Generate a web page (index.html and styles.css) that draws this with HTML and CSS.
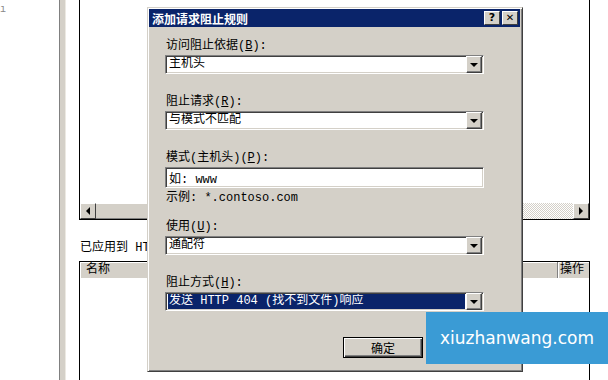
FILE: index.html
```html
<!DOCTYPE html>
<html lang="zh-CN">
<head>
  <meta charset="UTF-8" />
  <title>添加请求阻止规则</title>
  <link rel="stylesheet" href="styles.css">
</head>
<body>

  <div class="desk">
    <div class="left-pane"><span class="stray">ı</span></div>
    <div class="splitter"></div>
    <div class="gap"></div>

    <!-- 背景窗口 -->
    <div class="panel">
      <div class="upper-list">
        <div class="list-space"></div>
        <div class="hscroll">
          <span class="sbtn"><i class="tri-left"></i></span>
          <span class="thumb"></span>
          <span class="track"></span>
          <span class="sbtn"><i class="tri-right"></i></span>
        </div>
      </div>
      <div class="applied">已应用到 HTTP</div>
      <div class="lower-list">
        <div class="list-head">
          <span class="col col-name">名称</span>
          <span class="col col-op">操作</span>
        </div>
      </div>
    </div>
    <div class="right-pane"></div>
  </div>

  <!-- 对话框 -->
  <div class="dialog">
    <div class="titlebar">
      <span class="title">添加请求阻止规则</span>
      <div class="caption-btns">
        <span class="cbtn">?</span>
        <span class="cbtn cbtn-x">✕</span>
      </div>
    </div>

    <div class="dlg-body">
      <div class="field">
        <label>访问阻止依据(<u>B</u>):</label>
        <div class="combo"><span class="combo-text">主机头</span><span class="drop"><i></i></span></div>
      </div>

      <div class="field">
        <label>阻止请求(<u>R</u>):</label>
        <div class="combo"><span class="combo-text">与模式不匹配</span><span class="drop"><i></i></span></div>
      </div>

      <div class="field">
        <label>模式(主机头)(<u>P</u>):</label>
        <div class="textbox">如: www</div>
        <div class="example">示例: *.contoso.com</div>
      </div>

      <div class="field field-tight">
        <label>使用(<u>U</u>):</label>
        <div class="combo"><span class="combo-text">通配符</span><span class="drop"><i></i></span></div>
      </div>

      <div class="field">
        <label>阻止方式(<u>H</u>):</label>
        <div class="combo combo-selected"><span class="combo-text">发送 HTTP 404 (找不到文件)响应</span><span class="drop"><i></i></span></div>
      </div>
    </div>

    <div class="dlg-foot">
      <button class="btn btn-default">确定</button>
    </div>
  </div>

  <!-- 水印 -->
  <div class="watermark">xiuzhanwang.com</div>

</body>
</html>
```

FILE: styles.css
```css
body {
  margin: 0;
  width: 608px;
  height: 380px;
  overflow: hidden;
  background: #fff;
  font-family: 'Liberation Mono', 'Noto Sans CJK SC', monospace;
  font-size: 12px;
  color: #000;
  position: relative;
}

.desk {
  display: flex;
  height: 380px;
}

.left-pane {
  width: 59px;
  position: relative;
}

.stray {
  position: absolute;
  left: 0;
  top: 4px;
  font-size: 10px;
  color: #888;
}

.splitter {
  width: 5px;
  background: #d4d0c8;
  border-left: 1px solid #808080;
  border-right: 1px solid #ece9e2;
}

.gap {
  width: 13px;
}

.panel {
  width: 511px;
  display: flex;
  flex-direction: column;
}

.upper-list {
  height: 219px;
  border: 1px solid #000;
  border-top: none;
  display: flex;
  flex-direction: column;
}

.list-space {
  flex: 1;
}

.hscroll {
  height: 16px;
  display: flex;
}

.sbtn {
  width: 14px;
  height: 14px;
  background: #d4d0c8;
  border: 1px solid;
  border-color: #fff #404040 #404040 #fff;
  display: flex;
  align-items: center;
  justify-content: center;
}

.tri-left {
  border-top: 4px solid transparent;
  border-bottom: 4px solid transparent;
  border-right: 4px solid #000;
}

.tri-right {
  border-top: 4px solid transparent;
  border-bottom: 4px solid transparent;
  border-left: 4px solid #000;
}

.thumb {
  width: 200px;
  background: #d4d0c8;
  border-top: 1px solid #fff;
  border-bottom: 1px solid #808080;
}

.track {
  flex: 1;
  background: repeating-conic-gradient(#d4d0c8 0 25%, #fff 0 50%) 0 0 / 2px 2px;
}

.applied {
  margin-top: 21px;
  line-height: 14px;
  padding-left: 1px;
}

.lower-list {
  flex: 1;
  margin-top: 6px;
  border: 1px solid #000;
  border-bottom: none;
}

.list-head {
  display: flex;
  height: 16px;
  background: #d4d0c8;
}

.col {
  line-height: 16px;
  box-sizing: border-box;
  border-right: 1px solid #808080;
  box-shadow: inset 1px 1px #fff;
}

.col-name {
  flex: 1;
  padding-left: 6px;
}

.col-op {
  width: 31px;
  padding-left: 2px;
  border-right: none;
}

.right-pane {
  flex: 1;
}

/* 对话框 */
.dialog {
  position: absolute;
  left: 147px;
  top: 7px;
  width: 376px;
  height: 365px;
  box-sizing: border-box;
  background: #d4d0c8;
  border: 1px solid;
  border-color: #d4d0c8 #404040 #404040 #d4d0c8;
  box-shadow: inset 1px 1px #fff, inset -1px -1px #808080;
  padding: 1px 2px 2px 1px;
  display: flex;
  flex-direction: column;
}

.titlebar {
  height: 18px;
  background: #0a246a;
  display: flex;
  align-items: center;
  justify-content: space-between;
  padding: 0 2px 0 3px;
}

.title {
  color: #fff;
  font-weight: bold;
  font-family: 'Noto Sans CJK SC', sans-serif;
  font-size: 12px;
}

.caption-btns {
  display: flex;
  gap: 2px;
}

.cbtn {
  width: 14px;
  height: 12px;
  background: #d4d0c8;
  border: 1px solid;
  border-color: #fff #404040 #404040 #fff;
  font-family: 'DejaVu Sans', sans-serif;
  font-weight: bold;
  font-size: 11px;
  line-height: 12px;
  text-align: center;
}

.cbtn-x {
  font-size: 10px;
}

.dlg-body {
  padding: 12px 0 0 16px;
}

.field {
  margin-bottom: 21px;
}

.field-tight {
  margin-top: -6px;
}

.field label {
  display: block;
  line-height: 14px;
  margin-bottom: 2px;
  padding-left: 1px;
}

.combo,
.textbox {
  width: 319px;
  height: 19px;
  box-sizing: border-box;
  background: #fff;
  border: 1px solid;
  border-color: #808080 #fff #fff #808080;
  box-shadow: inset 1px 1px #404040, inset -1px -1px #d4d0c8;
  display: flex;
  align-items: center;
  padding: 0 1px 0 2px;
}

.textbox {
  height: 21px;
  padding-left: 3px;
}

.combo-text {
  flex: 1;
  padding-left: 1px;
  line-height: 15px;
  white-space: nowrap;
  overflow: hidden;
}

.combo-selected .combo-text {
  background: #0a246a;
  color: #fff;
  margin-right: 1px;
}

.drop {
  width: 14px;
  height: 15px;
  background: #d4d0c8;
  border: 1px solid;
  border-color: #fff #404040 #404040 #fff;
  box-shadow: inset -1px -1px #808080;
  display: flex;
  align-items: center;
  justify-content: center;
}

.drop i {
  border-left: 4px solid transparent;
  border-right: 4px solid transparent;
  border-top: 4px solid #000;
  margin-top: 1px;
}

.example {
  margin-top: 3px;
  line-height: 14px;
  padding-left: 1px;
}

.dlg-foot {
  display: flex;
  padding-left: 194px;
  margin-top: 5px;
}

.btn {
  width: 80px;
  height: 21px;
  background: #d4d0c8;
  border: 1px solid #000;
  box-shadow: inset 1px 1px #fff, inset -1px -1px #404040, inset -2px -2px #808080;
  font-family: 'Noto Sans CJK SC', sans-serif;
  font-size: 12px;
  padding: 0;
}

/* 水印 */
.watermark {
  position: absolute;
  left: 426px;
  top: 312px;
  width: 182px;
  height: 52px;
  background: #3a9bd5;
  color: #fff;
  font-family: 'DejaVu Sans', sans-serif;
  font-size: 17px;
  line-height: 52px;
  text-align: center;
}
```
